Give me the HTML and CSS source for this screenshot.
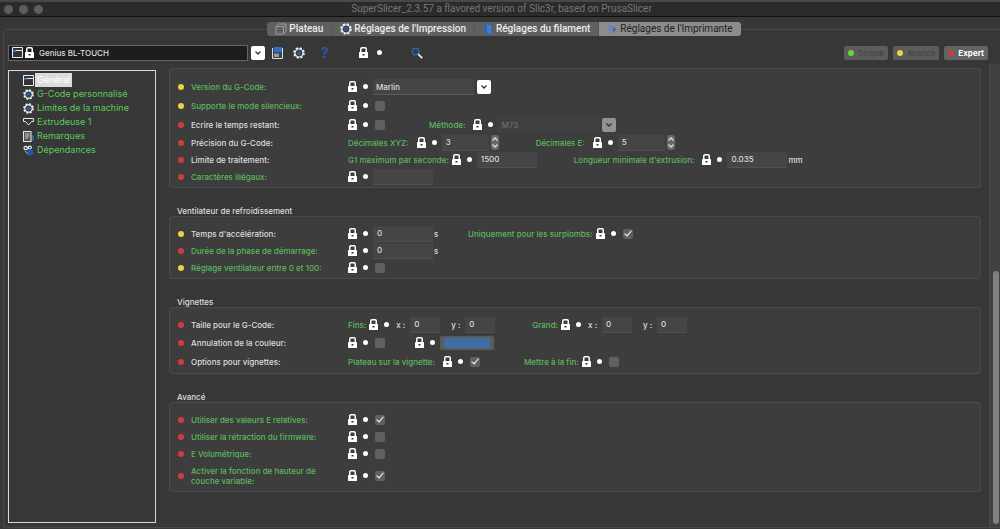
FILE: index.html
```html
<!DOCTYPE html>
<html lang="fr">

<head>
    <meta charset="utf-8">
    <title>SuperSlicer_2.3.57</title>
    <link rel="stylesheet" href="styles.css">
</head>

<body>

    <!-- shared icons -->
    <svg class="sprite" aria-hidden="true">
        <symbol id="lock" viewBox="0 0 9 11">
            <path d="M1.75 5.5V2Q1.75 0.75 3 0.75H6Q7.25 0.75 7.25 2V5.5" fill="none" stroke="#fff" stroke-width="1.5" />
            <rect x="0" y="5" width="9" height="6" rx="0.6" fill="#fff" />
            <rect x="3.5" y="7" width="2" height="1.5" fill="#333" />
        </symbol>
        <symbol id="gear" viewBox="0 0 12 12">
            <circle cx="6" cy="6" r="4.9" fill="none" stroke="#f0f0f0" stroke-width="1.8" stroke-dasharray="2.2 1.65" />
            <circle cx="6" cy="6" r="4" fill="#2c3f5e" stroke="#f0f0f0" stroke-width="1.2" />
            <circle cx="6" cy="6" r="2" fill="#3f567c" />
        </symbol>
        <symbol id="printer" viewBox="0 0 11 11">
            <path d="M0.5 0.5H10.5V10.5H0.5Z" fill="#333" stroke="#eee" />
            <path d="M0 3.5H11" stroke="#eee" />
            <path d="M1 3.5L4 2.2V5.2L1 4.6Z" fill="#2f6fc4" />
        </symbol>
        <symbol id="chevron" viewBox="0 0 8 6">
            <path d="M1.5 1.5L4 4L6.5 1.5" fill="none" stroke="currentColor" stroke-width="1.3" />
        </symbol>
    </svg>

    <header class="titlebar">
        <span class="light"></span>
        <span class="light"></span>
        <span class="light"></span>
        <h1>SuperSlicer_2.3.57 a flavored version of Slic3r, based on PrusaSlicer</h1>
    </header>

    <nav class="tabs">
        <button type="button">
            <svg width="12" height="12" viewBox="0 0 12 12" fill="none" stroke="#9a9a9a"><path d="M1 3.5H8.5V11H1ZM1 3.5L3.5 1H11V8.5L8.5 11M8.5 3.5L11 1" /></svg>
            Plateau
        </button>
        <button type="button"><svg width="12" height="12"><use href="#gear" /></svg>Réglages de l'Impression</button>
        <button type="button">
            <svg width="11" height="12" viewBox="0 0 11 12"><path d="M1 1L4.5 0.5V9.5L1 9Z" fill="#2c66b5" /><path d="M4 2H7.5L8.5 5V10.5H4Z" fill="#3f7fd0" /><path d="M9 6V11.5H4" fill="none" stroke="#2c66b5" /></svg>
            Réglages du filament
        </button>
        <button type="button" class="active">
            <svg width="11" height="11" viewBox="0 0 11 11"><path d="M1 1H6L9.5 4V9H5L1 6Z" fill="#7187ad" /><path d="M6 3L9.5 5.5L6 8Z" fill="#3d64a6" /></svg>
            Réglages de l'Imprimante
        </button>
    </nav>

    <main class="panel">
        <div class="toolbar">
            <div class="combo preset">
                <div class="combo-box">
                    <svg width="11" height="11"><use href="#printer" /></svg>
                    <svg width="9" height="11"><use href="#lock" /></svg>
                </div>
                <select aria-label="Imprimante">
                    <option>Genius BL-TOUCH</option>
                </select>
                <span class="arrow"><svg width="8" height="6"><use href="#chevron" /></svg></span>
            </div>
            <button type="button" class="tool" aria-label="Enregistrer">
                <svg width="11" height="12" viewBox="0 0 11 12"><path d="M0.5 1V11.5H10.5V1" fill="#3a4250" stroke="#ddd" /><rect x="2" y="0" width="8" height="5" fill="#2f6fc4" /><rect x="2" y="6.5" width="5" height="3.5" fill="#9a9a9a" /></svg>
            </button>
            <button type="button" class="tool" aria-label="Paramètres"><svg width="12" height="12"><use href="#gear" /></svg></button>
            <button type="button" class="tool help" aria-label="Aide">?</button>
            <button type="button" class="tool lock-all" aria-label="Verrou"><svg width="9" height="11"><use href="#lock" /></svg><i class="dot"></i></button>
            <button type="button" class="tool search" aria-label="Rechercher">
                <svg width="12" height="12" viewBox="0 0 12 12"><circle cx="4.5" cy="4.5" r="3.3" fill="#333a45" stroke="#2f62a8" stroke-width="1.6" /><path d="M7.2 7.2L11.2 11.2" stroke="#eee" stroke-width="1.8" /></svg>
            </button>
            <div class="modes">
                <button type="button" disabled><i class="level simple"></i>Simple</button>
                <button type="button" disabled><i class="level advanced"></i>Avancé</button>
                <button type="button"><i class="level expert"></i>Expert</button>
            </div>
        </div>

        <div class="content">
            <ul class="tree">
                <li><svg width="11" height="11"><use href="#printer" /></svg><a href="#general" class="selected">Général</a></li>
                <li><svg width="11" height="11"><use href="#gear" /></svg><a href="#gcode">G-Code personnalisé</a></li>
                <li><svg width="11" height="11"><use href="#gear" /></svg><a href="#limites">Limites de la machine</a></li>
                <li>
                    <svg width="11" height="11" viewBox="0 0 11 11"><path d="M0.5 1.5H10.5V4.5H8.5L5.5 8L2.5 4.5H0.5Z" fill="#333" stroke="#e6e6e6" /></svg>
                    <a href="#extrudeuse">Extrudeuse 1</a>
                </li>
                <li>
                    <svg width="11" height="11" viewBox="0 0 11 11"><path d="M8 3L11 5V9L8 11Z" fill="#2f62a8" /><rect x="0.5" y="0.5" width="7.5" height="10" fill="#555" stroke="#e6e6e6" /><path d="M2 3H6.5M2 5H6.5M2 7H5" stroke="#ccc" /></svg>
                    <a href="#remarques">Remarques</a>
                </li>
                <li>
                    <svg width="11" height="11" viewBox="0 0 11 11"><circle cx="2.7" cy="3" r="1.7" fill="#333" stroke="#eee" stroke-width="1.2" /><circle cx="6.8" cy="2.6" r="1.5" fill="#333" stroke="#eee" stroke-width="1.2" /><circle cx="7" cy="7.5" r="3.2" fill="#2457a5" /><path d="M2 6L5 9" stroke="#9bb" /></svg>
                    <a href="#dependances">Dépendances</a>
                </li>
            </ul>

            <form class="settings">
                <section>
                    <div class="group">
                        <div class="row tall">
                            <i class="level advanced"></i>
                            <label class="name set" for="flavor">Version du G-Code:</label>
                            <div class="option">
                                <svg class="lock"><use href="#lock" /></svg><i class="dot"></i>
                                <div class="combo">
                                    <div class="combo-box"></div>
                                    <select id="flavor"><option>Marlin</option></select>
                                    <span class="arrow"><svg width="8" height="6"><use href="#chevron" /></svg></span>
                                </div>
                            </div>
                        </div>
                        <div class="row tall">
                            <i class="level advanced"></i>
                            <label class="name set" for="silent">Supporte le mode silencieux:</label>
                            <div class="option"><svg class="lock"><use href="#lock" /></svg><i class="dot"></i><input type="checkbox" id="silent"></div>
                        </div>
                        <div class="row tall">
                            <i class="level expert"></i>
                            <label class="name" for="remaining">Ecrire le temps restant:</label>
                            <div class="option"><svg class="lock"><use href="#lock" /></svg><i class="dot"></i><input type="checkbox" id="remaining"></div>
                            <div class="option">
                                <label class="set wide" for="method">Méthode:</label>
                                <svg class="lock"><use href="#lock" /></svg><i class="dot"></i>
                                <div class="combo disabled">
                                    <div class="combo-box"></div>
                                    <select id="method" disabled><option>M73</option></select>
                                    <span class="arrow"><svg width="8" height="6"><use href="#chevron" /></svg></span>
                                </div>
                            </div>
                        </div>
                        <div class="row">
                            <i class="level expert"></i>
                            <span class="name">Précision du G-Code:</span>
                            <div class="option">
                                <label class="set wide" for="xyz">Décimales XYZ:</label>
                                <svg class="lock"><use href="#lock" /></svg><i class="dot"></i>
                                <input type="text" class="spin" id="xyz" value="3">
                                <span class="stepper"><svg width="8" height="6"><use href="#chevron" /></svg><svg width="8" height="6"><use href="#chevron" /></svg></span>
                            </div>
                            <div class="option">
                                <label class="set wide" for="dec-e">Décimales E:</label>
                                <svg class="lock"><use href="#lock" /></svg><i class="dot"></i>
                                <input type="text" class="spin" id="dec-e" value="5">
                                <span class="stepper"><svg width="8" height="6"><use href="#chevron" /></svg><svg width="8" height="6"><use href="#chevron" /></svg></span>
                            </div>
                        </div>
                        <div class="row">
                            <i class="level expert"></i>
                            <span class="name">Limite de traitement:</span>
                            <div class="option">
                                <label class="set" for="g1max">G1 maximum par seconde:</label>
                                <svg class="lock"><use href="#lock" /></svg><i class="dot"></i>
                                <input type="text" id="g1max" value="1500">
                            </div>
                            <div class="option">
                                <label class="set wide" for="minlen">Longueur minimale d'extrusion:</label>
                                <svg class="lock"><use href="#lock" /></svg><i class="dot"></i>
                                <input type="text" id="minlen" value="0.035"><span class="unit">mm</span>
                            </div>
                        </div>
                        <div class="row">
                            <i class="level expert"></i>
                            <label class="name set" for="illegal">Caractères illégaux:</label>
                            <div class="option"><svg class="lock"><use href="#lock" /></svg><i class="dot"></i><input type="text" id="illegal"></div>
                        </div>
                    </div>
                </section>

                <section>
                    <h2>Ventilateur de refroidissement</h2>
                    <div class="group">
                        <div class="row">
                            <i class="level advanced"></i>
                            <label class="name" for="speedup">Temps d'accélération:</label>
                            <div class="option"><svg class="lock"><use href="#lock" /></svg><i class="dot"></i><input type="text" id="speedup" value="0"><span class="unit">s</span></div>
                            <div class="option near">
                                <label class="set" for="overhangs">Uniquement pour les surplombs:</label>
                                <svg class="lock"><use href="#lock" /></svg><i class="dot"></i><input type="checkbox" id="overhangs" checked>
                            </div>
                        </div>
                        <div class="row">
                            <i class="level expert"></i>
                            <label class="name set" for="kickstart">Durée de la phase de démarrage:</label>
                            <div class="option"><svg class="lock"><use href="#lock" /></svg><i class="dot"></i><input type="text" id="kickstart" value="0"><span class="unit">s</span></div>
                        </div>
                        <div class="row">
                            <i class="level advanced"></i>
                            <label class="name set" for="percent">Réglage ventilateur entre 0 et 100:</label>
                            <div class="option"><svg class="lock"><use href="#lock" /></svg><i class="dot"></i><input type="checkbox" id="percent"></div>
                        </div>
                    </div>
                </section>

                <section>
                    <h2>Vignettes</h2>
                    <div class="group">
                        <div class="row">
                            <i class="level expert"></i>
                            <span class="name">Taille pour le G-Code:</span>
                            <div class="option">
                                <span class="set">Fins:</span>
                                <svg class="lock"><use href="#lock" /></svg><i class="dot"></i>
                                <label class="axis" for="small-x">x :</label><input type="text" class="coord" id="small-x" value="0">
                                <label class="axis" for="small-y">y :</label><input type="text" class="coord" id="small-y" value="0">
                            </div>
                            <div class="option">
                                <span class="set">Grand:</span>
                                <svg class="lock"><use href="#lock" /></svg><i class="dot"></i>
                                <label class="axis" for="big-x">x :</label><input type="text" class="coord" id="big-x" value="0">
                                <label class="axis" for="big-y">y :</label><input type="text" class="coord" id="big-y" value="0">
                            </div>
                        </div>
                        <div class="row tall">
                            <i class="level expert"></i>
                            <label class="name" for="color-on">Annulation de la couleur:</label>
                            <div class="option"><svg class="lock"><use href="#lock" /></svg><i class="dot"></i><input type="checkbox" id="color-on"></div>
                            <div class="option near"><svg class="lock"><use href="#lock" /></svg><i class="dot"></i><input type="color" aria-label="Couleur" value="#406da3"></div>
                        </div>
                        <div class="row tall">
                            <i class="level expert"></i>
                            <span class="name">Options pour vignettes:</span>
                            <div class="option">
                                <label class="set wide" for="bed">Plateau sur la vignette:</label>
                                <svg class="lock"><use href="#lock" /></svg><i class="dot"></i><input type="checkbox" id="bed" checked>
                            </div>
                            <div class="option">
                                <label class="set" for="at-end">Mettre à la fin:</label>
                                <svg class="lock"><use href="#lock" /></svg><i class="dot"></i><input type="checkbox" id="at-end">
                            </div>
                        </div>
                    </div>
                </section>

                <section>
                    <h2>Avancé</h2>
                    <div class="group">
                        <div class="row">
                            <i class="level expert"></i>
                            <label class="name set" for="relative">Utiliser des valeurs E relatives:</label>
                            <div class="option"><svg class="lock"><use href="#lock" /></svg><i class="dot"></i><input type="checkbox" id="relative" checked></div>
                        </div>
                        <div class="row">
                            <i class="level expert"></i>
                            <label class="name set" for="retract">Utiliser la rétraction du firmware:</label>
                            <div class="option"><svg class="lock"><use href="#lock" /></svg><i class="dot"></i><input type="checkbox" id="retract"></div>
                        </div>
                        <div class="row">
                            <i class="level expert"></i>
                            <label class="name set" for="volumetric">E Volumétrique:</label>
                            <div class="option"><svg class="lock"><use href="#lock" /></svg><i class="dot"></i><input type="checkbox" id="volumetric"></div>
                        </div>
                        <div class="row double">
                            <i class="level expert"></i>
                            <label class="name set" for="layer">Activer la fonction de hauteur de couche variable:</label>
                            <div class="option"><svg class="lock"><use href="#lock" /></svg><i class="dot"></i><input type="checkbox" id="layer" checked></div>
                        </div>
                    </div>
                </section>
            </form>

            <div class="scrollbar"><div class="thumb"></div></div>
        </div>
    </main>

</body>

</html>
```

FILE: styles.css
```css
* {
    box-sizing: border-box;
}

body {
    margin: 0;
    height: 100vh;
    display: flex;
    flex-direction: column;
    overflow: hidden;
    background: #373737;
    color: #dedede;
    font-family: Inter, "Liberation Sans", sans-serif;
    font-size: 8px;
    font-weight: 500;
    line-height: 10px;
}

button, input, select {
    margin: 0;
    padding: 0;
    border: 0;
    color: inherit;
    font: inherit;
}

svg, i {
    display: block;
    flex: none;
}

.sprite {
    position: absolute;
    width: 0;
    height: 0;
}

/* title bar */
.titlebar {
    flex: none;
    display: flex;
    align-items: center;
    gap: 6px;
    height: 17px;
    padding: 0 4px;
    background: #2b2b2b;
    border-top: 2px solid #484848;
    border-bottom: 1px solid #111;
}

.light {
    width: 9px;
    height: 9px;
    border-radius: 50%;
    background: #5e5e5e;
}

.titlebar h1 {
    flex: 1;
    margin: 0 42px 0 0;
    text-align: center;
    font-family: Roboto, sans-serif;
    font-size: 10px;
    font-weight: 400;
    color: #767676;
}

/* tabs, centred over the panel's top border */
.tabs {
    flex: none;
    position: relative;
    z-index: 1;
    align-self: center;
    display: flex;
    margin: 5px 0 -7px 8px;
    border-radius: 3px;
    overflow: hidden;
}

.tabs button {
    display: flex;
    align-items: center;
    gap: 2px;
    height: 14px;
    padding: 0 8px;
    background: #606060;
    border-right: 1px solid #575757;
    font-family: Roboto, sans-serif;
    font-size: 10px;
    font-weight: 500;
    color: #ececec;
}

.tabs .active {
    background: #8c8c8c;
    border-right: 0;
    color: #222;
    font-weight: 400;
}

.panel {
    flex: 1;
    min-height: 0;
    display: flex;
    flex-direction: column;
    margin: 0 0 1px 3px;
    border: 1px solid #484848;
    border-right: 0;
    border-radius: 4px 0 0 4px;
}

/* toolbar */
.toolbar {
    flex: none;
    display: flex;
    align-items: center;
    height: 34px;
    padding: 11px 12px 0 4px;
}

.toolbar > .preset {
    width: 257px;
    margin-right: 2px;
}

.tool {
    display: flex;
    align-items: center;
    justify-content: center;
    width: 21px;
    background: none;
}

.help {
    width: 32px;
    color: #2a5ca8;
    font-size: 14px;
    font-weight: 700;
}

.lock-all {
    gap: 9px;
    width: 59px;
}

.search {
    width: 34px;
}

.modes {
    display: flex;
    gap: 5px;
    margin-left: auto;
}

.modes button {
    display: flex;
    align-items: center;
    gap: 4px;
    height: 14px;
    padding: 0 4px;
    border-radius: 2px;
    background: #636363;
    font-weight: 700;
    color: #fff;
}

.modes button:disabled {
    background: #5c5c5c;
    font-weight: 500;
    color: #454545;
}

/* drop-downs: the select lies across the box and the arrow */
.combo {
    display: grid;
    grid-template-columns: 1fr 14px;
    column-gap: 3px;
    align-items: center;
    width: 118px;
}

.combo-box {
    grid-area: 1 / 1;
    height: 16px;
    background: #454545;
    border-bottom: 1px solid #5a5a5a;
}

.combo select {
    grid-area: 1 / 1 / 2 / 3;
    height: 16px;
    padding-left: 3px;
    appearance: none;
    background: none;
}

.combo option {
    background: #333;
}

.arrow {
    grid-area: 1 / 2;
    display: grid;
    place-items: center;
    height: 14px;
    border-radius: 2px;
    background: #fff;
    color: #333;
    pointer-events: none;
}

.preset .combo-box {
    display: flex;
    align-items: center;
    gap: 2px;
    padding-left: 3px;
    background: #1d1d1d;
    border: 1px solid #666;
}

.preset select {
    padding-left: 31px;
}

.disabled .combo-box {
    background: #404040;
    border-color: #404040;
}

.disabled select {
    opacity: 1;
    color: #6c6c6c;
}

.disabled .arrow {
    background: #929292;
}

/* page tree */
.content {
    flex: 1;
    min-height: 0;
    display: flex;
}

.tree {
    width: 148px;
    margin: 6px 13px 4px 4px;
    padding: 2px 0 0 14px;
    border: 1px solid #d8d8d8;
    list-style: none;
    font-size: 9px;
    font-weight: 400;
}

.tree li {
    display: flex;
    align-items: center;
    gap: 1px;
    height: 14px;
}

.tree a {
    padding: 2px;
    color: #5cc95c;
    text-decoration: none;
}

.tree .selected {
    background: #dcdcdc;
    color: #fff;
}

/* settings */
.settings {
    flex: 1;
    padding: 4px 8px 0 0;
}

section {
    margin-bottom: 19px;
}

h2 {
    margin: 0 0 0 8px;
    font-size: 8px;
    line-height: 9px;
    font-weight: 500;
}

.group {
    padding: 8px 8px 2px;
    background: #3d3d3d;
    border: 1px solid #4a4a4a;
    border-radius: 3px;
}

.row {
    display: flex;
    align-items: center;
    height: 17px;
}

.row.tall {
    height: 19px;
}

.row.double {
    height: 27px;
}

.level {
    width: 6px;
    height: 6px;
    border-radius: 50%;
    background: #d03c3c;
}

.level.simple {
    background: #6cd04c;
}

.level.advanced {
    background: #ecd24a;
}

.name {
    width: 140px;
    margin: 0 17px 0 7px;
}

.set {
    color: #5cb85c;
}

.option {
    display: flex;
    align-items: center;
}

.option + .option {
    margin-left: 37px;
}

.option + .near {
    margin-left: 23px;
}

.option .set {
    padding-right: 3px;
}

.option .wide {
    padding-right: 8px;
}

.lock {
    width: 9px;
    height: 11px;
}

.dot {
    width: 5px;
    height: 5px;
    border-radius: 50%;
    background: #fff;
}

.option .dot {
    margin: 0 5px 0 6px;
}

.option input[type="text"] {
    width: 60px;
    height: 16px;
    padding-left: 4px;
    background: #454545;
    border-bottom: 1px solid #505050;
}

.option input.spin {
    width: 47px;
}

.option input.coord {
    width: 30px;
}

.axis {
    width: 16px;
    padding-left: 2px;
}

.coord + .axis {
    width: 25px;
    padding-left: 11px;
}

.unit {
    width: 11px;
    margin-left: 1px;
}

.stepper {
    display: flex;
    flex-direction: column;
    justify-content: center;
    gap: 1px;
    width: 8px;
    height: 15px;
    margin-left: 2px;
    border-radius: 3px;
    background: #696969;
}

.stepper svg:first-child {
    transform: rotate(180deg);
}

input[type="checkbox"] {
    display: grid;
    place-items: center;
    width: 10px;
    height: 10px;
    margin: 0 7px 0 2px;
    appearance: none;
    border-radius: 2px;
    background: #606060;
}

input[type="checkbox"]:checked::before {
    content: "";
    width: 3px;
    height: 6px;
    margin-bottom: 2px;
    border: solid #fff;
    border-width: 0 1px 1px 0;
    transform: rotate(40deg);
}

input[type="color"] {
    width: 54px;
    height: 14px;
    padding: 2px 4px;
    background: #5a5a5a;
    border-radius: 2px;
}

input[type="color"]::-webkit-color-swatch-wrapper {
    padding: 0;
}

input[type="color"]::-webkit-color-swatch {
    border: 0;
}

.scrollbar {
    display: flex;
    flex-direction: column;
    justify-content: flex-end;
    width: 11px;
    padding: 0 1px 3px 3px;
    background: #414141;
    border-left: 1px solid #4a4a4a;
}

.thumb {
    height: 55%;
    border-radius: 3px;
    background: #808080;
}
```
